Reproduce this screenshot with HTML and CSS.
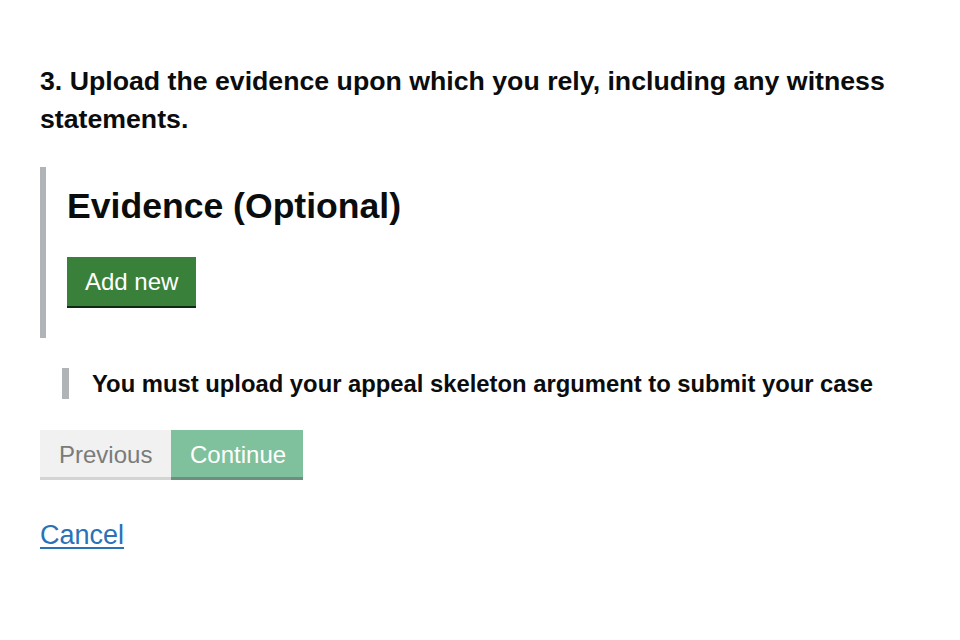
FILE: index.html
```html
<!DOCTYPE html>
<html lang="en">
<head>
<meta charset="utf-8">
<title>Upload evidence</title>
<link rel="stylesheet" href="styles.css">
</head>
<body>
<main class="page">
  <h2 class="question">3. Upload the evidence upon which you rely, including any witness statements.</h2>
  <section class="group">
    <h3 class="group-title">Evidence (Optional)</h3>
    <button class="btn btn-add" type="button">Add new</button>
  </section>
  <div class="inset">You must upload your appeal skeleton argument to submit your case</div>
  <div class="nav">
    <button class="btn btn-prev" type="button">Previous</button>
    <button class="btn btn-next" type="button">Continue</button>
  </div>
  <a class="cancel" href="#">Cancel</a>
</main>
</body>
</html>
```
FILE: styles.css
```css
html, body {
  margin: 0;
  padding: 0;
  background: #ffffff;
}
body {
  font-family: "Liberation Sans", Arial, sans-serif;
  color: #0b0c0c;
}
.page {
  padding: 62px 40px 0 40px;
  display: flex;
  flex-direction: column;
  align-items: flex-start;
}
.question {
  margin: 0;
  font-size: 26.7px;
  line-height: 38px;
  font-weight: 700;
  max-width: 880px;
}
.group {
  margin-top: 29px;
  border-left: 6px solid #b1b4b6;
  padding: 18px 0 32px 21px;
  display: flex;
  flex-direction: column;
  align-items: flex-start;
}
.group-title {
  margin: 0 0 30px 0;
  font-size: 35.6px;
  line-height: 42px;
  font-weight: 700;
}
.btn {
  font-family: "Liberation Sans", Arial, sans-serif;
  font-size: 24px;
  line-height: 28px;
  border: 0;
  margin: 0;
  cursor: pointer;
}
.btn-add {
  background: #39803b;
  color: #ffffff;
  padding: 11px 18px 10px 18px;
  box-shadow: 0 2px 0 #0e2a10;
  height: 49px;
}
.inset {
  margin: 30px 0 0 22px;
  border-left: 7px solid #b1b4b6;
  padding-left: 23px;
  font-size: 23.8px;
  line-height: 31px;
  font-weight: 700;
}
.nav {
  margin-top: 31px;
  display: flex;
}
.btn-prev, .btn-next {
  height: 50px;
  padding: 0 19px;
  border-bottom: 3px solid;
  padding-top: 2px;
}
.btn-prev {
  width: 131px;
  background: #f0f1f0;
  color: #7a7b7a;
  border-bottom-color: #d3d5d3;
}
.btn-next {
  width: 132px;
  background: #7ec19c;
  color: #ffffff;
  border-bottom-color: #6e8f7d;
}
.cancel {
  margin-top: 39px;
  font-size: 27px;
  line-height: 32px;
  color: #2b71b8;
  text-decoration: underline;
  text-decoration-thickness: 2px;
  text-underline-offset: 3px;
}
```
